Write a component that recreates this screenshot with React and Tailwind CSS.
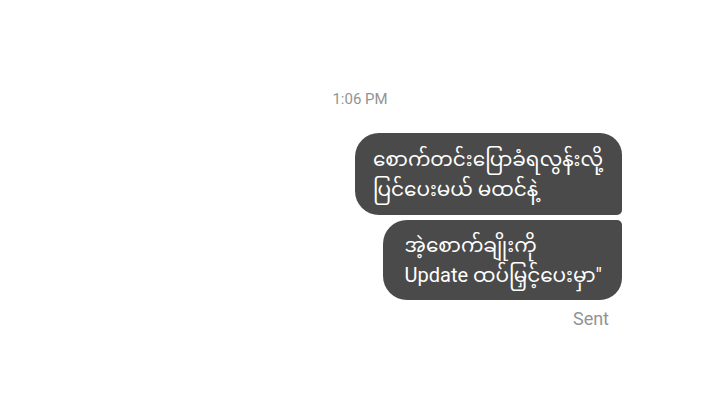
export default function App() {
  return (
    <div className="flex h-[405px] w-[720px] flex-col bg-white font-['Roboto','Noto_Sans_Myanmar','Padauk',sans-serif]">
      <div className="pt-[89px] text-center text-[15px] leading-[20px] text-[#939393]">1:06 PM</div>
      <div className="mt-[24px] flex flex-col items-end gap-[5px] pr-[98px]">
        <div className="rounded-l-[24px] rounded-tr-[22px] rounded-br-[5px] bg-[#4a4a4a] py-[11px] pl-[18px] pr-[19px] text-[20px] leading-[30px] text-white">
          <div>စောက်တင်းပြောခံရလွန်းလို့</div>
          <div>ပြင်ပေးမယ် မထင်နဲ့</div>
        </div>
        <div className="rounded-l-[24px] rounded-tr-[5px] rounded-br-[22px] bg-[#4a4a4a] py-[10px] pl-[22px] pr-[20px] text-[20px] leading-[30px] text-white">
          <div>အဲ့စောက်ချိုးကို</div>
          <div>Update ထပ်မြှင့်ပေးမှာ"</div>
        </div>
      </div>
      <div className="mt-[7px] pr-[111px] text-right text-[18px] leading-[24px] text-[#939393]">Sent</div>
    </div>
  );
}
